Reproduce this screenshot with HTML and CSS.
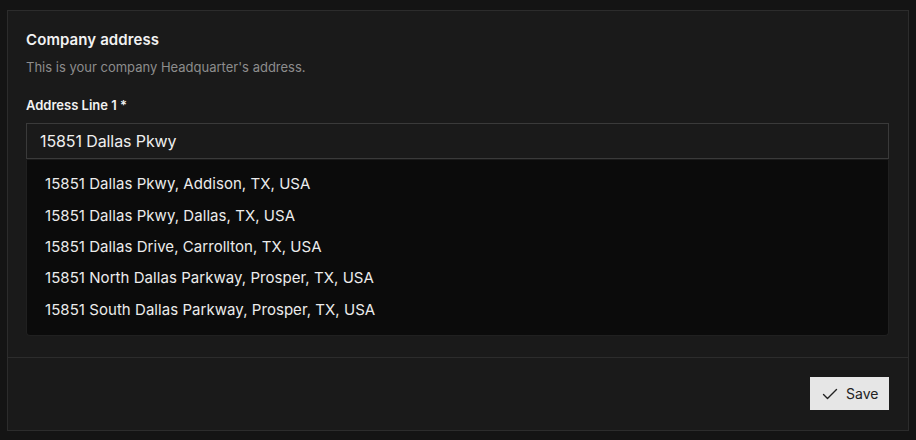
FILE: index.html
```html
<!DOCTYPE html>
<html lang="en">
<head>
<meta charset="utf-8">
<title>Company address</title>
<link rel="stylesheet" href="styles.css">
</head>
<body>
<div class="card">
  <section class="section">
    <h2 class="title">Company address</h2>
    <p class="subtitle">This is your company Headquarter's address.</p>
    <div class="field">
      <label class="label">Address Line 1 *</label>
      <div class="combo">
        <div class="input">15851 Dallas Pkwy</div>
        <ul class="menu">
          <li class="option">15851 Dallas Pkwy, Addison, TX, USA</li>
          <li class="option">15851 Dallas Pkwy, Dallas, TX, USA</li>
          <li class="option">15851 Dallas Drive, Carrollton, TX, USA</li>
          <li class="option">15851 North Dallas Parkway, Prosper, TX, USA</li>
          <li class="option">15851 South Dallas Parkway, Prosper, TX, USA</li>
        </ul>
      </div>
    </div>
  </section>
  <footer class="footer">
    <button class="save">
      <svg class="check" width="16" height="16" viewBox="0 0 16 16" fill="none"><path d="M1.5 8.5 L5.5 12.5 L14.5 3.5" stroke="#222" stroke-width="1.4" stroke-linecap="round" stroke-linejoin="round"/></svg>
      <span>Save</span>
    </button>
  </footer>
</div>
</body>
</html>
```

FILE: styles.css
```css
* { box-sizing: border-box; }
html, body { margin: 0; }
body {
  background: #141414;
  padding: 10px 7px 9px 7px;
  font-family: Inter, "Noto Sans", sans-serif;
  color: #ededed;
}
.card {
  width: 902px;
  height: 421px;
  background: #1a1a1a;
  border: 1px solid #2c2c2c;
  display: flex;
  flex-direction: column;
}
.section {
  height: 346px;
  padding: 19px 19px 0 18px;
}
.title {
  margin: 0;
  font-size: 15px;
  line-height: 20px;
  font-weight: 600;
  color: #f2f2f2;
  letter-spacing: 0.1px;
}
.subtitle {
  margin: 8px 0 0;
  font-size: 13px;
  line-height: 18px;
  color: #8d8d8d;
}
.field {
  margin-top: 21px;
}
.label {
  display: block;
  font-size: 13px;
  line-height: 16px;
  font-weight: 600;
  color: #f2f2f2;
  letter-spacing: 0;
}
.combo {
  position: relative;
  margin-top: 10px;
}
.input {
  height: 36px;
  border: 1px solid #3a3a3a;
  background: #1a1a1a;
  padding: 0 13px;
  display: flex;
  align-items: center;
  font-size: 16px;
  color: #efefef;
  letter-spacing: -0.1px;
}
.menu {
  position: absolute;
  left: 0;
  right: 0;
  top: 37px;
  margin: 0;
  padding: 8px 18px 10px;
  list-style: none;
  background: #0b0b0b;
  border: 1px solid #202020;
  border-top: none;
  border-radius: 0 0 4px 4px;
}
.option {
  height: 31.4px;
  display: flex;
  align-items: center;
  font-size: 15px;
  color: #ececec;
  letter-spacing: 0.05px;
}
.footer {
  flex: 1;
  border-top: 1px solid #2c2c2c;
  padding: 19px 19px 0 0;
  display: flex;
  justify-content: flex-end;
  align-items: flex-start;
}
.save {
  height: 33px;
  width: 79px;
  border: none;
  background: #e6e6e6;
  color: #222;
  font-family: Inter, "Noto Sans", sans-serif;
  font-size: 14px;
  display: flex;
  align-items: center;
  gap: 8px;
  padding: 0 0 0 12px;
  cursor: pointer;
}
.check { display: block; }
```
